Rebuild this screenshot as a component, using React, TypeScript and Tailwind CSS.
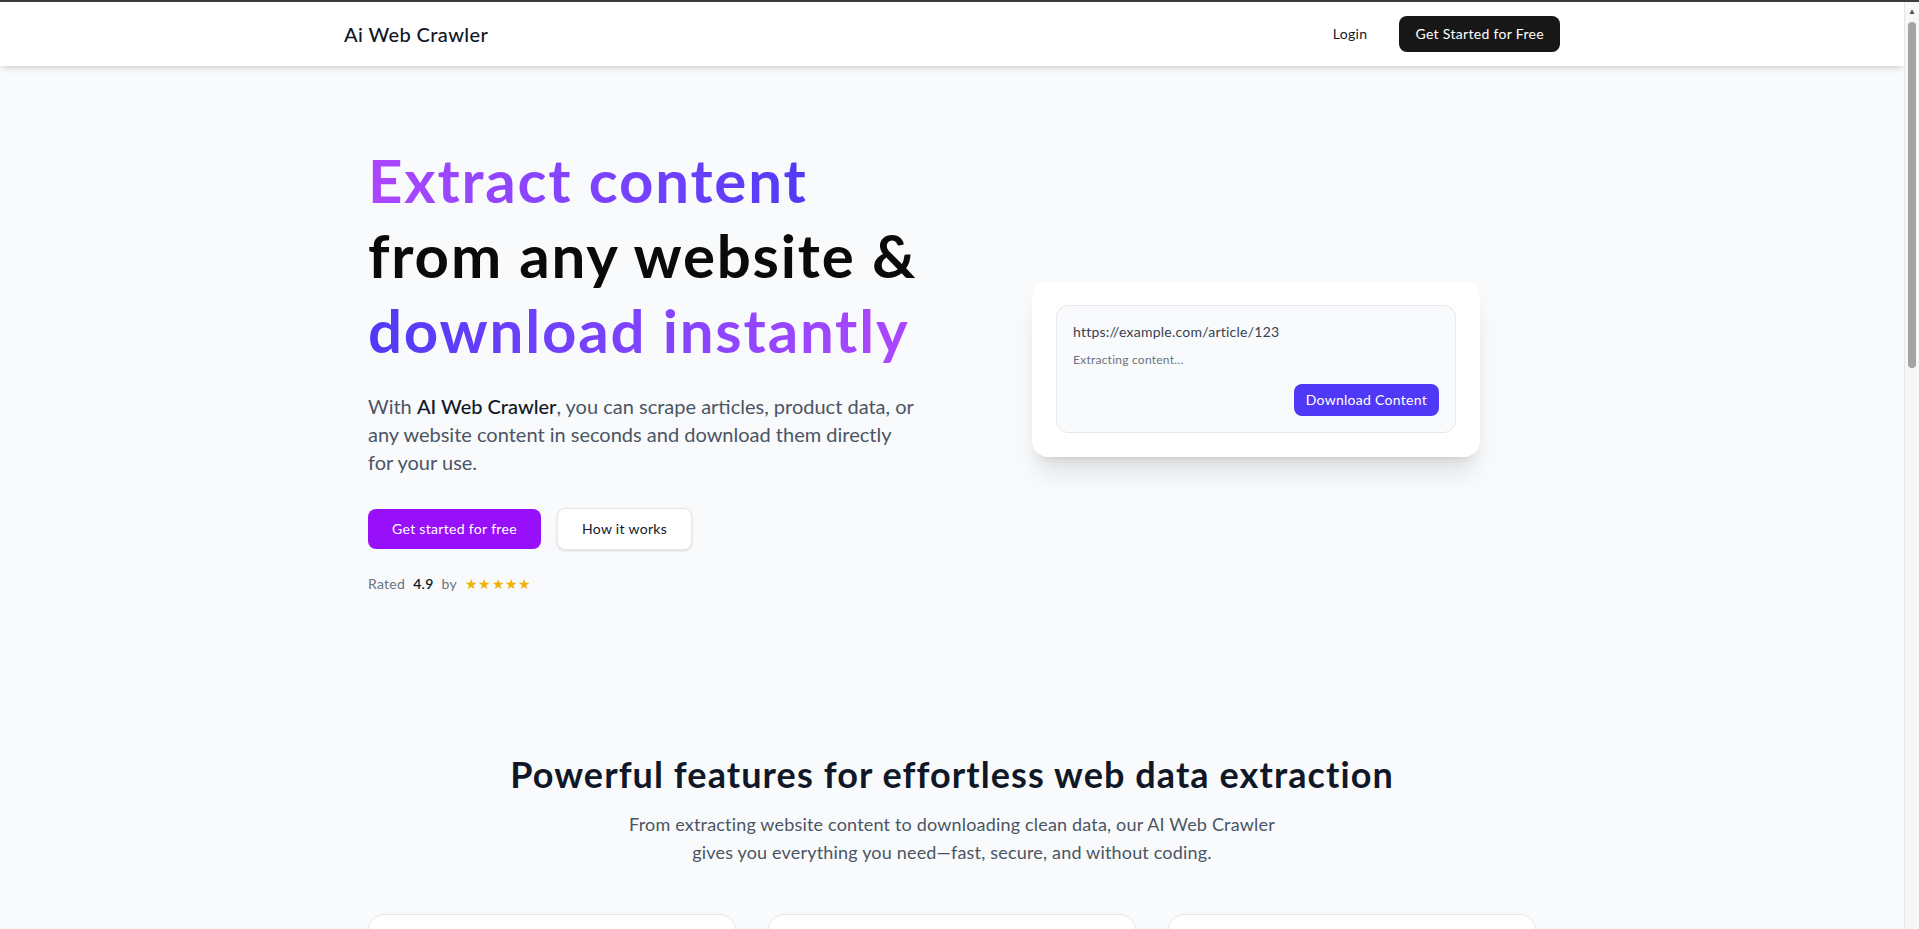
import { Download, Globe, ShieldCheck } from "lucide-react";

const features = [
  {
    icon: Globe,
    title: "Extract from any website",
    text: "Paste a link and pull articles, product pages or any public content in a few seconds.",
  },
  {
    icon: Download,
    title: "Download clean data",
    text: "Get tidy, structured output ready to use as text, JSON or CSV without extra cleanup.",
  },
  {
    icon: ShieldCheck,
    title: "Fast and secure",
    text: "Your crawls run privately and quickly, with no code and no setup required.",
  },
];

const Header = () => (
  <header className="h-16 bg-white shadow-md">
    <div className="max-w-7xl mx-auto px-8 h-full flex items-center justify-between">
      <span className="text-xl font-medium text-gray-900 tracking-[0.02em]">
        Ai Web Crawler
      </span>
      <div className="flex items-center gap-4 tracking-[0.02em]">
        <a href="#" className="px-4 py-2 text-sm text-gray-900">
          Login
        </a>
        <a
          href="#"
          className="px-4 py-2 text-sm text-white bg-[#171717] rounded-lg"
        >
          Get Started for Free
        </a>
      </div>
    </div>
  </header>
);

const Hero = () => (
  <section className="pt-[77px] pb-20">
    <div className="max-w-7xl mx-auto px-14 grid grid-cols-2 gap-12 items-center">
      <div>
        <h1 className="text-6xl font-bold leading-tight tracking-[0.03em]">
          <span className="block w-fit bg-linear-to-r from-purple-500 to-indigo-600 bg-clip-text text-transparent">
            Extract content
          </span>
          <span className="block text-[#0a0a0a]">from any website &amp;</span>
          <span className="block w-fit bg-linear-to-r from-indigo-600 to-purple-500 bg-clip-text text-transparent">
            download instantly
          </span>
        </h1>
        <p className="mt-6 max-w-[552px] text-xl leading-7 text-gray-600">
          With <span className="font-medium text-gray-900">AI Web Crawler</span>,
          you can scrape articles, product data, or any website content in
          seconds and download them directly for your use.
        </p>
        <div className="mt-8 flex items-center gap-4 tracking-[0.02em]">
          <button className="px-6 py-2.5 text-sm text-white bg-purple-600 rounded-lg">
            Get started for free
          </button>
          <button className="px-6 py-2.5 text-sm text-gray-900 bg-white border border-gray-200 rounded-lg shadow-sm">
            How it works
          </button>
        </div>
        <div className="mt-6 flex items-center gap-2 text-sm text-gray-500 tracking-[0.02em]">
          <span>Rated</span>
          <span className="font-semibold text-gray-900">4.9</span>
          <span>by</span>
          <span className="text-yellow-500">★★★★★</span>
        </div>
      </div>

      <div className="w-full max-w-md mx-auto bg-white rounded-2xl shadow-xl p-6">
        <div className="rounded-xl border border-gray-200 bg-gray-50 p-4 tracking-[0.015em]">
          <p className="text-sm text-gray-700">https://example.com/article/123</p>
          <p className="mt-2.5 text-xs text-gray-500">Extracting content...</p>
          <div className="mt-4 flex justify-end">
            <button className="px-3 py-1.5 text-sm text-white bg-indigo-600 rounded-lg tracking-[0.02em]">
              Download Content
            </button>
          </div>
        </div>
      </div>
    </div>
  </section>
);

const Features = () => (
  <section className="py-20">
    <div className="max-w-7xl mx-auto px-14">
      <h2 className="text-4xl font-bold text-gray-900 text-center tracking-[0.03em]">
        Powerful features for effortless web data extraction
      </h2>
      <p className="mt-4 max-w-[650px] mx-auto text-lg text-gray-600 text-center tracking-[0.01em]">
        From extracting website content to downloading clean data, our AI Web
        Crawler gives you everything you need—fast, secure, and without coding.
      </p>
      <div className="mt-12 grid grid-cols-3 gap-8">
        {features.map((f) => (
          <div
            key={f.title}
            className="bg-white border border-gray-200 rounded-2xl p-8"
          >
            <div className="h-12 w-12 rounded-xl bg-purple-100 text-purple-600 flex items-center justify-center">
              <f.icon size={24} />
            </div>
            <h3 className="mt-5 text-xl font-semibold text-gray-900">
              {f.title}
            </h3>
            <p className="mt-2 text-gray-600">{f.text}</p>
          </div>
        ))}
      </div>
    </div>
  </section>
);

const Scrollbar = () => (
  <div className="sticky top-0 h-screen w-[15px] shrink-0 bg-[#f7f7f7] border-l border-[#e6e6e6] flex flex-col items-center">
    <span className="mt-[5px] text-[8px] leading-none text-[#505050]">▲</span>
    <div className="mt-[7px] w-2 h-[346px] rounded-full bg-[#a3a3a3]" />
  </div>
);

export default function App() {
  return (
    <div className="min-h-screen bg-gray-50 font-['Lato','Noto_Sans',sans-serif]">
      <div className="h-0.5 bg-[#3b3b3b]" />
      <div className="flex items-start">
        <main className="flex-1 min-w-0">
          <Header />
          <Hero />
          <Features />
        </main>
        <Scrollbar />
      </div>
    </div>
  );
}
